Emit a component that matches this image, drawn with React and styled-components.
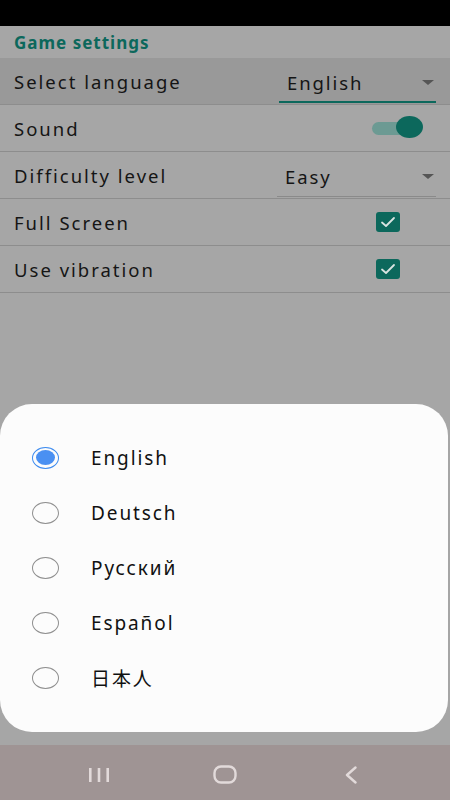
import React from "react";
import styled, { createGlobalStyle } from "styled-components";

const Global = createGlobalStyle`
  html, body { margin: 0; padding: 0; }
  body { width: 450px; height: 800px; overflow: hidden; background: #a6a6a6; font-family: "Noto Sans", "Noto Sans CJK JP", sans-serif; }
  * { box-sizing: border-box; }
`;

const Screen = styled.div`
  width: 450px;
  height: 800px;
  display: flex;
  flex-direction: column;
  background: #a6a6a6;
`;

const StatusBar = styled.div`
  height: 26px;
  background: #000;
  flex: none;
`;

const Main = styled.div`
  flex: 1;
  display: flex;
  flex-direction: column;
`;

const Header = styled.div`
  height: 32px;
  padding: 0 14px;
  display: flex;
  align-items: center;
  font-weight: 700;
  font-size: 17px;
  letter-spacing: 1px;
  color: #0c685c;
`;

const Row = styled.div`
  height: 47px;
  padding: 0 14px;
  display: flex;
  align-items: center;
  justify-content: space-between;
  border-bottom: 1px solid #8d8d8d;
  background: ${(p) => (p.$active ? "#999999" : "transparent")};
`;

const Label = styled.span`
  font-size: 18.5px;
  letter-spacing: 2px;
  color: #151515;
`;

const Dropdown = styled.div`
  width: ${(p) => p.$w}px;
  height: 40px;
  padding: 0 2px 0 8px;
  display: flex;
  align-items: center;
  justify-content: space-between;
  border-bottom: ${(p) => (p.$focused ? "2px solid #0c685c" : "1px solid #8a8a8a")};
  margin-top: 4px;
  font-size: 18.5px;
  letter-spacing: 1.9px;
  color: #151515;
`;

const Caret = styled.span`
  width: 0;
  height: 0;
  border-left: 6px solid transparent;
  border-right: 6px solid transparent;
  border-top: 5px solid #555;
`;

const Toggle = styled.div`
  position: relative;
  width: 52px;
  height: 22px;
  display: flex;
  align-items: center;
  margin-right: 12px;
`;

const Track = styled.div`
  width: 45px;
  height: 13px;
  border-radius: 7px;
  background: #6c9a93;
`;

const Thumb = styled.div`
  position: absolute;
  left: 24px;
  top: -1px;
  width: 27px;
  height: 22px;
  border-radius: 50%;
  background: #0c685c;
`;

const Check = styled.div`
  width: 24px;
  height: 20px;
  border-radius: 3px;
  background: #0c685c;
  display: flex;
  align-items: center;
  justify-content: center;
  margin-right: 36px;
`;

const Spacer = styled.div`
  flex: 1;
`;

const Dialog = styled.div`
  margin: 0 2px 13px 0;
  height: 328px;
  border-radius: 32px;
  background: #fcfcfc;
  padding: 26px 0;
  display: flex;
  flex-direction: column;
`;

const Option = styled.div`
  height: 55.2px;
  display: flex;
  align-items: center;
  padding-left: 32px;
  gap: 32px;
`;

const Radio = styled.div`
  width: 27px;
  height: 22px;
  border-radius: 50%;
  border: ${(p) => (p.$on ? "1.5px solid #3d8bef" : "1px solid #8f8f8f")};
  display: flex;
  align-items: center;
  justify-content: center;
  flex: none;
`;

const Dot = styled.div`
  width: 19px;
  height: 15px;
  border-radius: 50%;
  background: #4a90f2;
`;

const OptionText = styled.span`
  font-size: 19px;
  letter-spacing: 1.9px;
  color: #111;
`;

const NavBar = styled.div`
  height: 55px;
  background: #9f9494;
  display: flex;
  align-items: center;
  justify-content: center;
  gap: 86px;
  flex: none;
  padding-top: 4px;
`;

const NavSlot = styled.div`
  width: 40px;
  display: flex;
  justify-content: center;
  align-items: center;
`;

const languages = ["English", "Deutsch", "Русский", "Español", "日本人"];

const CheckMark = () => (
  <svg width="16" height="12" viewBox="0 0 16 12">
    <path d="M2 6.5 L6 10 L14 2" fill="none" stroke="#d9e4e2" strokeWidth="1.8" strokeLinecap="round" strokeLinejoin="round" />
  </svg>
);

export default function App() {
  return (
    <>
      <Global />
      <Screen>
        <StatusBar />
        <Main>
          <Header>Game settings</Header>
          <Row $active>
            <Label>Select language</Label>
            <Dropdown $w={157} $focused>
              <span>English</span>
              <Caret />
            </Dropdown>
          </Row>
          <Row>
            <Label>Sound</Label>
            <Toggle>
              <Track />
              <Thumb />
            </Toggle>
          </Row>
          <Row>
            <Label>Difficulty level</Label>
            <Dropdown $w={159}>
              <span>Easy</span>
              <Caret />
            </Dropdown>
          </Row>
          <Row>
            <Label>Full Screen</Label>
            <Check>
              <CheckMark />
            </Check>
          </Row>
          <Row>
            <Label>Use vibration</Label>
            <Check>
              <CheckMark />
            </Check>
          </Row>
          <Spacer />
          <Dialog>
            {languages.map((l, i) => (
              <Option key={l}>
                <Radio $on={i === 0}>{i === 0 && <Dot />}</Radio>
                <OptionText>{l}</OptionText>
              </Option>
            ))}
          </Dialog>
        </Main>
        <NavBar>
          <NavSlot>
            <svg width="22" height="16" viewBox="0 0 22 16">
              <rect x="1" y="1" width="2.6" height="14" fill="#e2dada" />
              <rect x="9.7" y="1" width="2.6" height="14" fill="#e2dada" />
              <rect x="18.4" y="1" width="2.6" height="14" fill="#e2dada" />
            </svg>
          </NavSlot>
          <NavSlot>
            <svg width="24" height="19" viewBox="0 0 24 19">
              <rect x="1.5" y="1.5" width="21" height="16" rx="6.5" fill="none" stroke="#e2dada" strokeWidth="2.4" />
            </svg>
          </NavSlot>
          <NavSlot>
            <svg width="14" height="18" viewBox="0 0 14 18">
              <path d="M11.5 1.5 L3 9 L11.5 16.5" fill="none" stroke="#e2dada" strokeWidth="2.4" strokeLinecap="round" strokeLinejoin="round" />
            </svg>
          </NavSlot>
        </NavBar>
      </Screen>
    </>
  );
}
